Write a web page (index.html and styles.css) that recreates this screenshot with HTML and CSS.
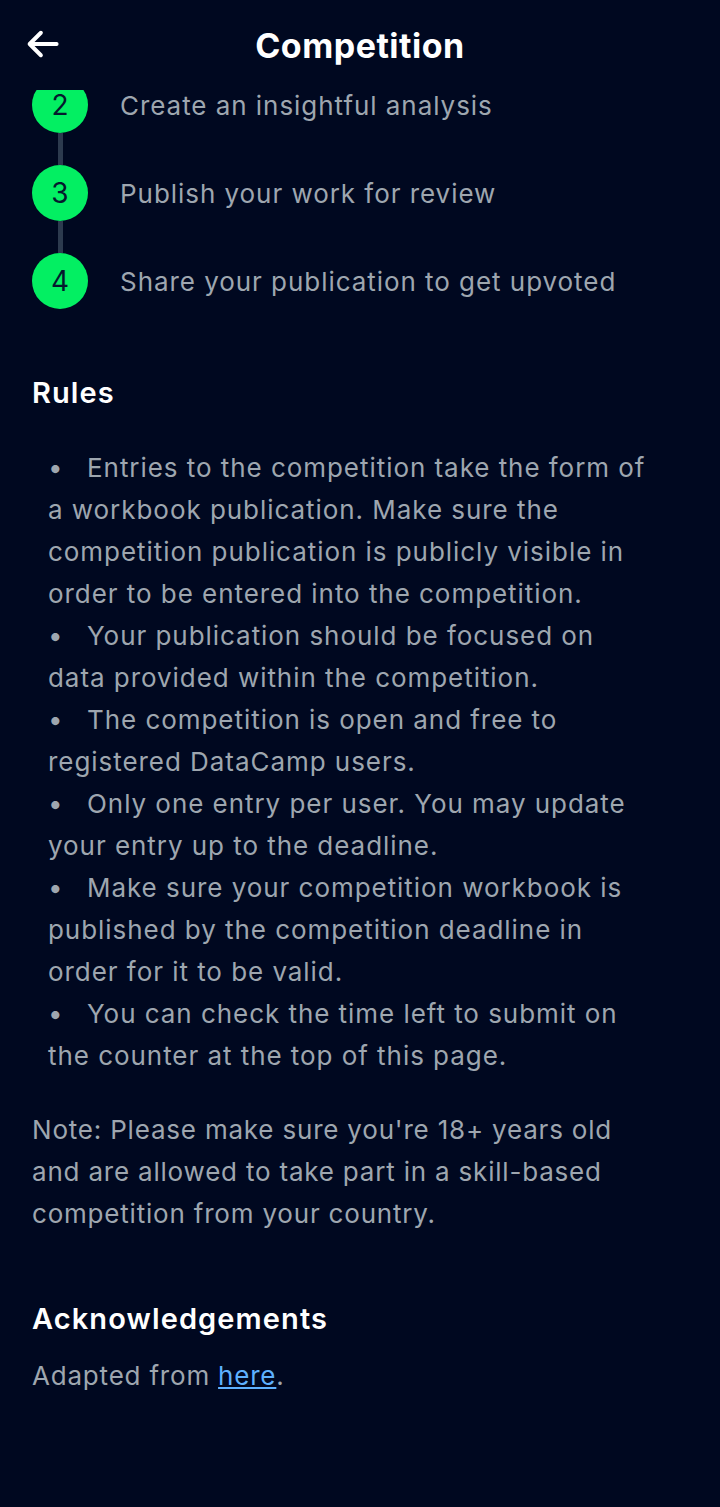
FILE: index.html
```html
<!DOCTYPE html>
<html lang="en">
<head>
<meta charset="utf-8">
<link rel="stylesheet" href="styles.css">
</head>
<body>
<header class="topbar">
  <svg class="back" viewBox="0 0 32 32" width="36" height="36" aria-hidden="true">
    <path d="M29 16H5M15 6L5 16l10 10" fill="none" stroke="#fff" stroke-width="3.5" stroke-linecap="round" stroke-linejoin="round"/>
  </svg>
  <h1 class="title">Competition</h1>
</header>
<main class="content">
  <ol class="steps">
    <li class="step"><span class="num">2</span><span class="label">Create an insightful analysis</span></li>
    <li class="step"><span class="num">3</span><span class="label">Publish your work for review</span></li>
    <li class="step last"><span class="num">4</span><span class="label">Share your publication to get upvoted</span></li>
  </ol>
  <h2 class="heading">Rules</h2>
  <ul class="rules">
    <li>Entries to the competition take the form of a workbook publication. Make sure the competition publication is publicly visible in order to be entered into the competition.</li>
    <li>Your publication should be focused on data provided within the competition.</li>
    <li>The competition is open and free to registered DataCamp users.</li>
    <li>Only one entry per user. You may update your entry up to the deadline.</li>
    <li>Make sure your competition workbook is published by the competition deadline in order for it to be valid.</li>
    <li>You can check the time left to submit on the counter at the top of this page.</li>
  </ul>
  <p class="note">Note: Please make sure you're 18+ years old and are allowed to take part in a skill-based competition from your country.</p>
  <h2 class="heading ack">Acknowledgements</h2>
  <p class="text">Adapted from <a href="#" class="link">here</a>.</p>
</main>
</body>
</html>
```
FILE: styles.css
```css
html, body {
  margin: 0;
  padding: 0;
  background: #000820;
}
body {
  font-family: Inter, "Liberation Sans", sans-serif;
  color: #9ea6af;
  min-height: 1507px;
}
.topbar {
  position: fixed;
  top: 0;
  left: 0;
  right: 0;
  height: 90px;
  background: #000820;
  display: flex;
  align-items: center;
  justify-content: center;
  z-index: 2;
}
.back {
  position: absolute;
  left: 24px;
  top: 26px;
}
.title {
  margin: 0;
  color: #fff;
  font-size: 34px;
  font-weight: 700;
  letter-spacing: 0.5px;
}
.content {
  padding: 77px 70px 0 32px;
}
.steps {
  list-style: none;
  margin: 0;
  padding: 0;
}
.step {
  display: flex;
  align-items: center;
  gap: 32px;
  height: 56px;
  margin-bottom: 32px;
  position: relative;
}
.step::after {
  content: "";
  position: absolute;
  left: 26px;
  top: 56px;
  width: 5px;
  height: 32px;
  background: #2c3a4e;
}
.step.last::after { display: none; }
.num {
  width: 56px;
  height: 56px;
  border-radius: 50%;
  background: #03ef62;
  color: #05192d;
  font-size: 28px;
  display: flex;
  align-items: center;
  justify-content: center;
  flex: none;
}
.label {
  font-size: 26px;
  letter-spacing: 0.95px;
  white-space: nowrap;
}
.heading {
  margin: 64px 0 0;
  color: #fff;
  font-size: 29px;
  font-weight: 600;
  line-height: 40px;
  letter-spacing: 1.1px;
}
.rules {
  margin: 34px 0 0;
  padding: 0 0 0 16px;
  list-style: none;
  font-size: 26px;
  line-height: 42px;
  letter-spacing: 0.95px;
}
.rules li::before {
  content: "\2022";
  display: inline-block;
  width: 39px;
}
.note {
  margin: 32px 0 0;
  font-size: 26px;
  line-height: 42px;
  letter-spacing: 0.8px;
}
.ack {
  margin-top: 64px;
}
.text {
  margin: 16px 0 0;
  font-size: 26px;
  line-height: 42px;
  letter-spacing: 0.8px;
}
.link {
  color: #5eb1ff;
}
```
